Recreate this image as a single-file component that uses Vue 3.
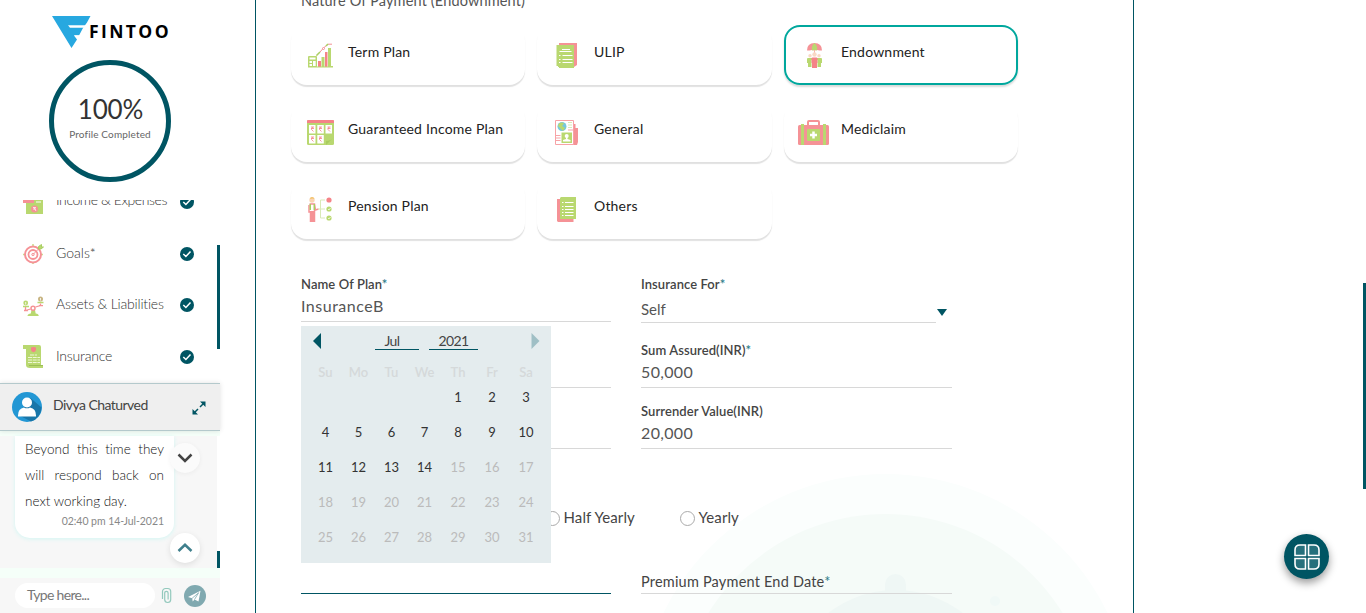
<script setup>
const menu = [
  { id: 'income', label: 'Income & Expenses' },
  { id: 'goals', label: 'Goals*' },
  { id: 'assets', label: 'Assets & Liabilities' },
  { id: 'insurance', label: 'Insurance' },
]
const plans = [
  { id: 'term', label: 'Term Plan' },
  { id: 'ulip', label: 'ULIP' },
  { id: 'endow', label: 'Endownment', selected: true },
  { id: 'income', label: 'Guaranteed Income Plan' },
  { id: 'general', label: 'General' },
  { id: 'medi', label: 'Mediclaim' },
  { id: 'pension', label: 'Pension Plan' },
  { id: 'others', label: 'Others' },
]
const weekdays = ['Su', 'Mo', 'Tu', 'We', 'Th', 'Fr', 'Sa']
const days = [...Array(4).fill(null), ...Array.from({ length: 31 }, (_, i) => i + 1)]
</script>

<template>
  <div class="page">
    <aside class="sidebar">
      <div class="logo">
        <svg width="39" height="32" viewBox="0 0 39 32">
          <path d="M0 0H38.5L35 6.500 31 12 27 19.500H22L25 23.500L19.5 32Z" fill="#27a8e0" />
          <path d="M16 9.300H34.500L33 11.700H18Z" fill="#fff" />
          <path d="M22 19.300H29L25.500 23Z" fill="#fff" />
        </svg>
        <span class="brand">FINTOO</span>
      </div>
      <div class="progress">
        <div class="percent">100%</div>
        <div class="caption">Profile Completed</div>
      </div>

      <nav class="menu">
        <div class="menu-list">
          <div v-for="m in menu" :key="m.id" class="menu-item">
            <svg v-if="m.id === 'income'" class="menu-icon" width="21" height="24" viewBox="0 0 21 24">
              <path d="M3 4h17v20H3z" fill="#b9d870" />
              <path d="M0 4h11v9H0z" fill="#f59296" />
              <path d="M13 9.500h5M13 12h5" stroke="#fff" />
              <circle cx="11.500" cy="19" r="3.500" fill="#f59296" />
              <path d="M10 17.500h3M10 19h3M11 17.500l2 3.500" stroke="#fff" stroke-width=".7" fill="none" />
            </svg>
            <svg v-else-if="m.id === 'goals'" class="menu-icon" width="21" height="24" viewBox="0 0 21 24">
              <path d="M10 3v20M0 13.500h20" stroke="#c6df8b" stroke-width="1.500" />
              <g fill="#fff" stroke="#f59296"><circle cx="10" cy="13.500" r="8" stroke-width="2" /><circle cx="10" cy="13.500" r="4.500" stroke-width="1.800" /><circle cx="10" cy="13.500" r="1.200" /></g>
              <path d="M10 13.500L18 5.500" stroke="#f59296" />
              <path d="M15.500 8V5.500L18.500 3.500V6H20.500L18 8z" stroke="#a9cf62" fill="#b9d870" />
            </svg>
            <svg v-else-if="m.id === 'assets'" class="menu-icon" width="21" height="24" viewBox="0 0 21 24">
              <circle cx="2.700" cy="10" r="2.400" fill="#b9d870" /><circle cx="17.500" cy="6" r="2.500" fill="#c8b583" />
              <path d="M2.700 9v2.500M17.500 5v2.500" stroke="#fff" stroke-width=".8" />
              <path d="M0 13.500h6M14.500 9.500h6" stroke="#b9d870" stroke-width="1.500" />
              <path d="M2.500 14v3.500L7.500 16M12.500 14l5-1.500V10.500M1 17.500h4M16 12.700h4" stroke="#f59296" stroke-width="1.300" fill="none" />
              <path d="M8.500 17h3.500l.7 3.500c2 .2 3 1 3 2.500H4.500C4.500 21.500 6 20.500 7.800 20.500z" fill="#b9d870" />
              <circle cx="10" cy="15.300" r="2" fill="#fff" stroke="#f59296" stroke-width="1.500" />
            </svg>
            <svg v-else class="menu-icon scroll" width="21" height="24" viewBox="0 0 21 24">
              <path d="M0 0h16q2 0 2 2v18h2v3H7q-4 0-4-3V4H0z" fill="#b9d870" />
              <path d="M6 20.500h14" stroke="#9cbe58" />
              <path d="M8 2.500L10.500 2l2.500.5v2.300q0 1.500-2.500 2.500-2.500-1-2.500-2.500z" fill="#f58388" />
              <path d="M7 10h7M5 12.500h12M5 15h12M5 17.500h12" stroke="#eef7d7" stroke-width="1.200" stroke-dasharray="4 .7" />
            </svg>
            <span class="menu-label" :class="m.id">{{ m.label }}</span>
            <svg class="tick" width="14" height="14" viewBox="0 0 14 14">
              <circle cx="7" cy="7" r="7" fill="#005563" />
              <path d="M3.300 7l2.600 2.500 4.600-5" fill="none" stroke="#fff" stroke-width="1.500" />
            </svg>
          </div>
        </div>
        <div class="thumb menu-thumb"></div>
      </nav>

      <section class="chat">
        <header class="chat-head">
          <svg width="30" height="30" viewBox="0 0 30 30">
            <circle cx="15" cy="15" r="15" fill="#2397d4" />
            <path d="M18.500 6L29.500 15.500A15 15 0 0 1 19 29.500L6.500 23z" fill="#1976a9" />
            <circle cx="15" cy="10.500" r="5" fill="#fff" />
            <path d="M6 23.500q0-7 6-8 3 1.700 6 0 6 1 6 8v1H6z" fill="#fff" />
          </svg>
          <span class="chat-name">Divya Chaturved</span>
          <svg class="expand" width="14" height="14" viewBox="0 0 14 14">
            <path d="M8 6L12 2M6 8L2 12" stroke="#005563" stroke-width="1.500" />
            <path d="M8 .5h5.500V6zM.5 8v5.500H6z" fill="#005563" />
          </svg>
        </header>
        <div class="chat-body">
          <div class="bubble">
            <p class="message">Beyond this time they will respond back on next working day.</p>
            <p class="time">02:40 pm 14-Jul-2021</p>
          </div>
          <div class="round round-down"><svg width="16" height="10" viewBox="0 0 16 10"><path d="M1.500 1.500L8 8l6.500-6.500" fill="none" stroke="#444" stroke-width="2.500" /></svg></div>
          <div class="round round-up"><svg width="16" height="10" viewBox="0 0 16 10"><path d="M1.500 8L8 1.800 14.500 8" fill="none" stroke="#3f7f8c" stroke-width="2.500" /></svg></div>
          <div class="thumb chat-thumb"></div>
        </div>
        <footer class="composer">
          <div class="type-box">Type here...</div>
          <svg class="clip" width="12" height="17" viewBox="0 0 12 17">
            <path d="M1.500 12V4.500a3 3 0 0 1 3-3h2.200a3 3 0 0 1 3 3v8a3 3 0 0 1-6 0V6a1.700 1.700 0 0 1 3.400 0v6.500" fill="none" stroke="#93c9bd" stroke-width="1.200" />
          </svg>
          <svg width="22" height="22" viewBox="0 0 22 22">
            <circle cx="11" cy="11" r="11" fill="#80a9b0" />
            <path d="M4 12L16.500 5.700 14.500 16.500l-4-2-1.800 2-.5-3.300z" fill="#fff" />
            <path d="M8.200 13.200l6.500-5.500-4.200 6.800" fill="none" stroke="#80a9b0" stroke-width=".8" />
          </svg>
        </footer>
      </section>
    </aside>

    <main class="content">
      <svg class="backdrop" width="878" height="140" viewBox="256 473 878 140">
        <circle cx="885.500" cy="721" r="247" fill="#fbfefd" />
        <circle cx="885.500" cy="722" r="208" fill="#f5fbf8" />
        <circle cx="895.500" cy="699" r="109" fill="#eff7f5" />
        <path d="M885 592v-7.500a10.500 10.500 0 0 1 21 0V592z" fill="#eff7f5" />
        <circle cx="995" cy="601" r="5" fill="#f0f9f7" />
      </svg>

      <div class="section-title">Nature Of Payment (Endownment)</div>
      <div class="plans">
        <div v-for="p in plans" :key="p.id" class="plan" :class="{ selected: p.selected }">
          <span class="plan-icon">
            <svg v-if="p.id === 'term'" width="25" height="25" viewBox="0 0 25 25">
              <path d="M10 18h3v6h-3zM17 9h2.500v15H17z" fill="#f58388" />
              <path d="M13.500 14h3v10h-3zM20 5h3v18h2v1.500H0V14q0-1 1-1h7q1 0 1 1v9.500h11z" fill="#b9d870" />
              <path d="M1.500 14.500h6v2h-6zM1.500 18h2.500v2H1.500zM5 18h2.700v5H5zM1.500 21h2.500v2H1.500z" fill="#fff" />
              <path d="M8.500 12.500L12 9l3.500-4L20 1.200h4" fill="none" stroke="#f59296" />
              <path d="M8.500 12.500L12 9M18 3l2-2" stroke="#a9cf62" stroke-width="1.500" />
              <circle cx="15.500" cy="5.500" r="1" fill="#fff" stroke="#f59296" />
            </svg>
            <svg v-else-if="p.id === 'ulip'" width="21" height="25" viewBox="0 0 21 25">
              <path d="M3 0h18v22l-3 2V3H3z" fill="#f59296" />
              <path d="M.5 2H18v23H3v-1H2v-1H.5z" fill="#b9d870" />
              <path d="M6 6.500h8M3.500 8.500h12M3 12.500h1.500M6.500 12.500h10M3 16.500h1.500M6.500 16.500h10M3 19.500h1.500M6.500 19.500h10" stroke="#fff" />
            </svg>
            <svg v-else-if="p.id === 'endow'" class="endow" width="15" height="25" viewBox="0 0 15 25">
              <path d="M0 7.500Q0 0 7.500 0T15 7.500H12.500Q10 6.500 7.500 7.500 5 6.500 2.500 7.500z" fill="#f59296" />
              <path d="M7.500 0Q11 3 10 7.500q-2-1-5 0Q4 3 7.500 0z" fill="#b9d870" />
              <path d="M7.500 7v3" stroke="#f9b9a8" />
              <path d="M0 16q0-1 1-1h13q1 0 1 1v4h-1v4h-3.500V17h-6v7H1v-4H0z" fill="#b9d870" />
              <path d="M4.500 15.500q0-1 1-1h4q1 0 1 1V20H10v5H5v-5h-.5z" fill="#f58388" />
              <g fill="#f9d9c6"><circle cx="7.500" cy="11.500" r="2.200" /><circle cx="3" cy="12.700" r="1.700" /><circle cx="12" cy="12.700" r="1.700" /></g>
            </svg>
            <svg v-else-if="p.id === 'income'" width="27" height="25" viewBox="0 0 27 25">
              <rect width="27" height="25" rx="1.500" fill="#b9d870" /><path d="M0 3V1q0-1 1-1h25q1 0 1 1v2z" fill="#f58388" />
              <path d="M2 5h6.500v8.500H2zM10.300 5h6.500v8.500h-6.500zM18.500 5H25v8.500h-6.500zM2 15h6.500v8.500H2zM10.300 15h6.500v8.500h-6.500z" fill="#fff" />
              <path d="M4 7h3M4 8.500h3M5.500 7l-1 2.500 2 2M12 7h3M12 8.500h3M13.500 7l-1 2.500 2 2M20.500 7h3M20.500 8.500h3M22 7l-1 2.500 2 2M4 17h3M4 18.500h3M5.500 17l-1 2.500 2 2M12 17h3M12 18.500h3M13.500 17l-1 2.500 2 2" fill="none" stroke="#f58388" stroke-width=".8" />
              <path d="M19 25v-4q5 0 8-4z" fill="#a8cc5e" />
            </svg>
            <svg v-else-if="p.id === 'general'" width="23" height="25" viewBox="0 0 23 25">
              <path d="M18 4h2.500v4H23v14l-1 3h-4z" fill="#f59296" />
              <path d="M.5.500h18v24H.5z" fill="#fff" stroke="#f7a3a6" />
              <circle cx="7" cy="6.500" r="4.500" fill="#77c8dc" /><path d="M4 3.500q3-2 5 0L7 6l3 2-2 3-3-3-2-2z" fill="#b9d870" />
              <path d="M13 2.500h4M13 5h4M13 7.500h4" stroke="#d9eab6" /><path d="M1 15.500h4.500M1 18h4.500M1 20.500h4.500M13 10h5" stroke="#f7a3a6" />
              <path d="M6.500 12.500H17V23H6.500z" fill="#b9d870" /><circle cx="11.700" cy="16" r="2" fill="#fff" /><path d="M11 17h1.500v2l3 1v1.500H8V20l3-1z" fill="#fff" />
            </svg>
            <svg v-else-if="p.id === 'medi'" width="31" height="25" viewBox="0 0 31 25">
              <path d="M10 6V2q0-1 1-1h9q1 0 1 1v4" fill="none" stroke="#f59296" stroke-width="2" />
              <rect y="5" width="31" height="20" rx="1.500" fill="#f59296" />
              <path d="M3 4h3v21H3zM25 4h3v21h-3z" fill="#b9d870" /><rect x="9" y="9" width="13" height="12" rx="1" fill="#b9d870" />
              <path d="M15.500 11.500v7M12 15h7" stroke="#fff" stroke-width="2.500" />
            </svg>
            <svg v-else-if="p.id === 'pension'" width="24" height="25" viewBox="0 0 24 25">
              <circle cx="4" cy="3" r="2.700" fill="#f9d5b3" /><path d="M2 2q0-2 2-2t2.500 2l-2-.5z" fill="#f3c36a" />
              <path d="M1.500 7h5l1 6 3-1M1 8v7h1.500v10H6.500V13" fill="none" stroke="#f59296" stroke-width="1.500" />
              <path d="M2 14h4.500v11H2z" fill="#f59296" /><path d="M1.500 7H3v6H1.500zM5.500 7H7v6H5.500z" fill="#a9cf62" />
              <path d="M17 3h-4.500v18H17M10 12h7" fill="none" stroke="#d9eab6" />
              <circle cx="21" cy="3" r="2.600" fill="#f58388" /><circle cx="21" cy="12" r="2.600" fill="#b9d870" /><circle cx="21" cy="21" r="2.600" fill="#b9d870" />
              <path d="M20 12l1 1 1.500-2M20 21l1 1 1.500-2" fill="none" stroke="#fff" stroke-width=".7" />
            </svg>
            <svg v-else width="19" height="25" viewBox="0 0 19 25">
              <path d="M0 2h14l2.500 20v3H1l-1-1z" fill="#f59296" /><path d="M4 0h15v22H3V1z" fill="#b9d870" />
              <path d="M5 5.500h1.500M8 5.500h8.500M5 9.500h1.500M8 9.500h8.500M5 12.500h1.500M8 12.500h8.500M5 15.500h1.500M8 15.500h8.500M5 18.500h1.500M8 18.500h8.500" stroke="#fff" />
            </svg>
          </span>
          <span class="plan-label">{{ p.label }}</span>
        </div>
      </div>

      <div class="form">
        <div class="column">
          <div class="field name-field">
            <label>Name Of Plan<i>*</i></label>
            <div class="value name">InsuranceB</div>
          </div>
          <div class="field second"></div>
          <div class="field third"></div>
          <div class="field due"></div>
          <div class="calendar">
            <div class="cal-head">
              <svg width="9" height="16" viewBox="0 0 9 16"><path d="M9 0v16L1 8z" fill="#005563" /></svg>
              <div class="cal-selects">
                <span class="cal-select month">Jul</span>
                <span class="cal-select year">2021</span>
              </div>
              <svg width="9" height="16" viewBox="0 0 9 16"><path d="M.5 0v16l8-8z" fill="#9fbfc5" /></svg>
            </div>
            <div class="cal-grid weekdays"><span v-for="w in weekdays" :key="w">{{ w }}</span></div>
            <div class="cal-grid days"><span v-for="(d, i) in days" :key="i" :class="{ off: d > 14 }">{{ d }}</span></div>
          </div>
        </div>

        <div class="column right">
          <div class="field select-field">
            <label>Insurance For<i>*</i></label>
            <div class="select-row">
              <div class="select-value">Self</div>
              <svg class="caret" width="10" height="7" viewBox="0 0 10 7"><path d="M0 0h10L5 7z" fill="#005563" /></svg>
            </div>
          </div>
          <div class="field second"><label>Sum Assured(INR)<i>*</i></label><div class="value">50,000</div></div>
          <div class="field third"><label>Surrender Value(INR)</label><div class="value">20,000</div></div>
          <div class="radios">
            <div class="radio half"><span class="dot"></span><span>Half Yearly</span></div>
            <div class="radio"><span class="dot"></span><span>Yearly</span></div>
          </div>
          <div class="field end-date">Premium Payment End Date<i>*</i></div>
        </div>
      </div>
    </main>

    <div class="fab">
      <svg width="26" height="26" viewBox="0 0 26 26" fill="#26707c" stroke="#fff" stroke-width="1.600">
        <path d="M11.500 11.500H1V6q0-5 5-5h5.500z" /><path d="M14.500 11.500H25V6q0-5-5-5h-5.500z" />
        <path d="M11.500 14.500H1V20q0 5 5 5h5.500z" /><path d="M14.500 14.500H25V20q0 5-5 5h-5.500z" />
      </svg>
    </div>
    <div class="page-thumb"></div>
  </div>
</template>

<style>
body { margin: 0; background: #fff; overflow: hidden; }
</style>
<style scoped>
* { box-sizing: border-box; }
.page { position: relative; display: flex; width: 1366px; height: 613px; overflow: hidden; font-family: Lato, "Open Sans", sans-serif; font-variant-ligatures: none; color: #444; font-size: 14px; }
svg { display: block; flex: none; }
i { font-style: normal; color: #2f7d89; }
p { margin: 0; }
.sidebar { width: 220px; height: 613px; display: flex; flex-direction: column; flex: none; }
.logo { display: flex; margin: 16px 0 12px 52px; height: 32px; }
.brand { font: 700 17.500px/30px "Open Sans", sans-serif; letter-spacing: 2.400px; color: #000; margin-left: -2px; }
.progress { width: 122px; height: 122px; margin-left: 49px; border: 5px solid #005563; border-radius: 50%; text-align: center; flex: none; }
.percent { font-size: 26px; line-height: 32px; margin-top: 28px; color: #333; letter-spacing: -.1px; padding-left: 1px; }
.caption { font-size: 10px; line-height: 14px; margin-top: 2px; letter-spacing: .15px; color: #666; white-space: nowrap; }
.menu { position: relative; height: 183px; margin-top: 18px; overflow: hidden; flex: none; }
.menu-list { margin-top: -24px; }
.menu-item { height: 51.5px; display: flex; align-items: center; padding-left: 23px; }
.menu-icon { margin-right: 12px; }
.scroll { margin-top: 2px; }
.menu-label { width: 124px; line-height: 20px; color: #333; font-weight: 300; white-space: nowrap; }
.menu-label.income { margin-top: -4px; letter-spacing: -.42px; }
.menu-label.assets { margin-top: -1px; letter-spacing: -.2px; }
.menu-label.insurance { letter-spacing: -.2px; }
.tick { margin-top: 1px; }
.thumb { position: absolute; right: 0; width: 3px; background: #005563; }
.menu-thumb { top: 45px; height: 104px; }
.chat { height: 230px; background: #f5fff9; }
.chat-head { height: 48px; display: flex; align-items: center; padding-left: 12px; background: #efefef; border-top: 1px solid #b4c9cc; border-bottom: 1px solid #b4c9cc; box-shadow: 0 0 5px rgba(0,0,0,.12); position: relative; }
.chat-name { width: 139px; margin: -5px 0 0 11px; letter-spacing: -.55px; }
.expand { margin-top: 1px; }
.chat-body { position: relative; height: 132px; margin-top: 5px; background: #f7f7f7; border-right: 3px solid #fff; }
.bubble { width: 159px; height: 102px; margin-left: 15px; padding: 0 10px; background: #fff; border-radius: 0 0 15px 15px; box-shadow: 0 1px 4px #d2f6f3; }
.message { line-height: 26px; font-size: 13.5px; text-align: justify; font-weight: 300; color: #111; }
.time { font-size: 10.5px; line-height: 14px; text-align: right; color: #888; white-space: nowrap; letter-spacing: -.05px; }
.round { position: absolute; left: 170px; width: 30px; height: 30px; border-radius: 50%; display: grid; place-items: center; background: #fbfbfb; box-shadow: 0 1px 5px rgba(0,0,0,.05); }
.round-down { top: 7px; }
.round-up { top: 97px; background: #fff; box-shadow: 0 2px 6px rgba(0,0,0,.1); }
.chat-thumb { top: 115px; right: -3px; height: 17px; }
.composer { height: 35px; margin-top: 10px; display: flex; align-items: center; background: #f7f7f7; padding-left: 15px; }
.type-box { width: 140px; height: 25px; border-radius: 13px; background: #fff; line-height: 24px; padding-left: 12px; color: #777; letter-spacing: -.7px; }
.clip { margin: 0 11px 0 6px; }
.content { position: relative; width: 879px; height: 613px; margin-left: 35px; border-left: 1px solid #005563; border-right: 1px solid #005563; flex: none; }
.backdrop { position: absolute; left: 0; bottom: 0; }
.section-title { margin: -9px 0 6px 45px; height: 28px; line-height: 20px; font-size: 14.500px; letter-spacing: .15px; color: #555; }
.plans { position: relative; display: grid; grid-template-columns: 234px 235px 234px; grid-auto-rows: 60px; gap: 17px 12px; margin-left: 35px; }
.plan { display: flex; border-radius: 16px; box-shadow: 0 2px 1px rgba(0,0,0,.12); }
.plan.selected { box-shadow: inset 0 0 0 2px #00a79d, 0 2px 2px rgba(0,0,0,.15); }
.plan-icon { width: 57px; height: 60px; display: flex; align-items: center; justify-content: center; padding-left: 1px; }
.endow { margin-left: 2px; }
.plan-label { line-height: 54px; color: #222; letter-spacing: .2px; white-space: nowrap; }
.form { position: relative; display: flex; gap: 30px; margin: 37px 0 0 45px; height: 340px; }
.column { position: relative; width: 310px; }
.right { width: 311px; }
.field { border-bottom: 1px solid #d8d8d8; }
label { display: block; font-weight: 600; font-size: 13px; line-height: 16px; height: 17px; color: #444; letter-spacing: .08px; }
.value { font-size: 16px; line-height: 22px; margin-top: 2px; color: #555; letter-spacing: .35px; }
.name { letter-spacing: .5px; }
.name-field { height: 46px; }
.second { height: 66px; padding-top: 20px; }
.third { height: 61px; padding-top: 15px; }
.due { height: 145px; border-color: #005563; }
.select-field { height: 46px; border: 0; }
.select-row { display: flex; align-items: center; margin-top: 2px; }
.select-value { width: 295px; height: 28px; line-height: 14px; padding-top: 7px; font-size: 15px; color: #555; border-bottom: 1px solid #d8d8d8; }
.caret { margin: 6px 0 0 1px; }
.radios { display: flex; height: 125px; padding-top: 56px; margin-left: -96px; }
.radio { display: flex; align-items: center; gap: 3.500px; height: 24px; font-size: 15px; white-space: nowrap; letter-spacing: .1px; }
.half { width: 135px; }
.dot { width: 15px; height: 15px; border: 1px solid #aaa; border-radius: 50%; background: #fff; margin-top: 2px; }
.end-date { height: 20px; line-height: 15px; font-size: 14.500px; letter-spacing: .2px; white-space: nowrap; }
.calendar { position: absolute; left: 0; top: 50px; width: 250px; height: 237px; background: #e4ecee; z-index: 2; padding: 7px 8px 0; }
.cal-head { display: flex; justify-content: space-between; padding: 0 3px; height: 29px; }
.cal-selects { display: flex; gap: 10px; }
.cal-select { height: 17px; line-height: 16px; border-bottom: 1px solid #005563; letter-spacing: -.6px; }
.month { width: 44px; padding-left: 10px; }
.year { width: 49px; padding-left: 10px; }
.cal-grid { display: grid; grid-template-columns: 33px 33px 33px 33px 34px 34px 34px; text-align: center; }
.weekdays { line-height: 20px; font-weight: 600; font-size: 13px; color: #d5d9da; }
.days { grid-auto-rows: 35px; line-height: 31px; font-size: 13px; color: #333; }
.off { color: #bbb; }
.fab { position: absolute; left: 1284px; top: 534px; width: 45px; height: 45px; border-radius: 50%; background: #005563; display: grid; place-items: center; box-shadow: 0 4px 8px rgba(0,0,0,.4); }
.page-thumb { position: absolute; right: 0; top: 283px; width: 3px; height: 206px; background: #005563; }
</style>
